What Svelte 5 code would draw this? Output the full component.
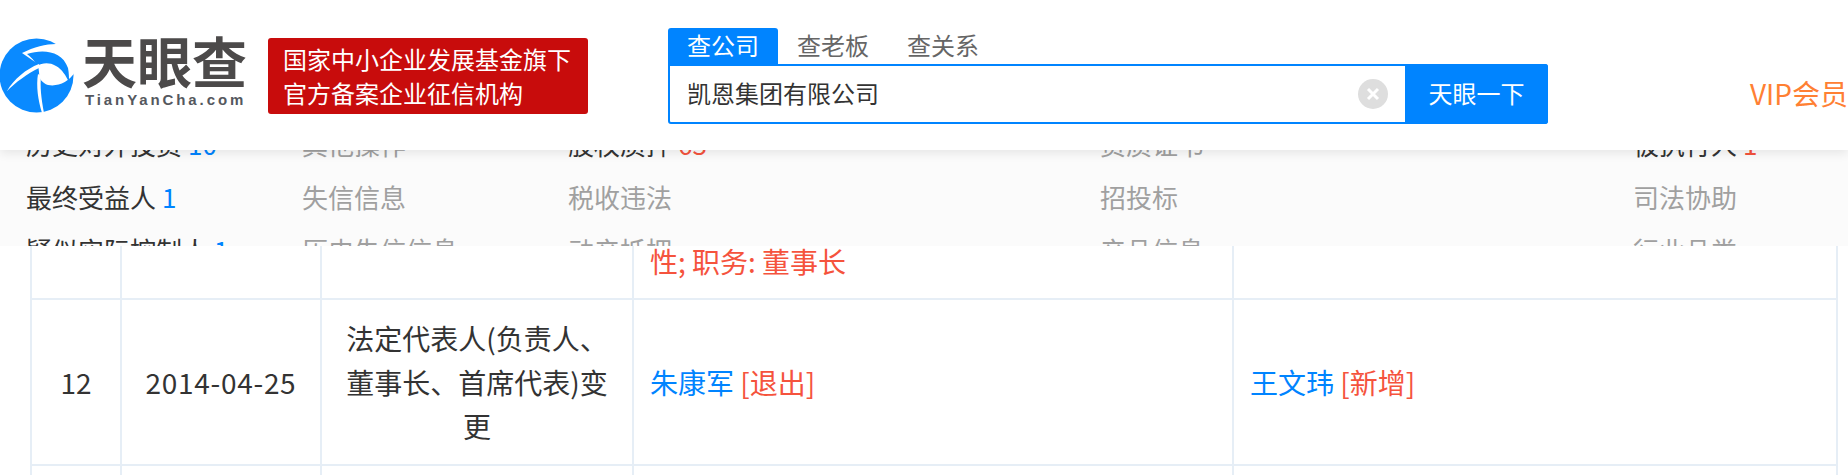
<script>
  const navRows = [
    [
      { label: "历史对外投资", count: "10", on: true, tone: "blue" },
      { label: "其他操作" },
      { label: "股权质押", count: "63", on: true, tone: "red" },
      { label: "资质证书" },
      { label: "被执行人", count: "1", on: true, tone: "red" }
    ],
    [
      { label: "最终受益人", count: "1", on: true, tone: "blue" },
      { label: "失信信息" },
      { label: "税收违法" },
      { label: "招投标" },
      { label: "司法协助" }
    ],
    [
      { label: "疑似实际控制人", count: "1", on: true, tone: "blue" },
      { label: "历史失信信息" },
      { label: "动产抵押" },
      { label: "产品信息" },
      { label: "行业品类" }
    ]
  ];

  let query = $state("凯恩集团有限公司");
  let activeTab = $state("查公司");
  const tabs = ["查公司", "查老板", "查关系"];
</script>

<div class="page">
  <header>
    <div class="logo">
      <svg class="mark" viewBox="0 0 75 76" width="75" height="76">
        <circle cx="36.5" cy="37.5" r="37" fill="#0a8aff" />
        <!-- white swirl, then the inner blue band on top of it -->
        <path fill="#fff" d="M22 15C34 9 46 6 56 6L76 6V34L72 36L76 32C70 44 58 49 48 47C42 45 39 41 39 34L38 26Z" />
        <path fill="#0a8aff" d="M27 16C42 11 62 12 68 30C69 35 69 40 69 44C66 38 62 31 56 28C49 24 42 25 37 28C35 23 31 19 27 16Z" />
        <path fill="#fff" d="M39 26C26 31 14 41 7 53C16 44 27 36 39 30Z" />
        <path fill="#fff" d="M38 36C36 48 38 62 42 75H44C41 60 40 48 41 38Z" />
      </svg>
      <div class="wordmark">
        <span class="name">天眼查</span>
        <span class="domain">TianYanCha.com</span>
      </div>
    </div>

    <div class="badge">国家中小企业发展基金旗下<br />官方备案企业征信机构</div>

    <div class="search">
      <div class="tabs">
        {#each tabs as tab}
          <button class:active={activeTab === tab} onclick={() => (activeTab = tab)}>{tab}</button>
        {/each}
      </div>
      <div class="box">
        <input bind:value={query} type="text" />
        <span class="clear">
          <svg viewBox="0 0 30 30" width="30" height="30">
            <circle cx="15" cy="15" r="15" fill="#dedede" />
            <path d="M10 10L20 20M20 10L10 20" stroke="#fff" stroke-width="3" />
          </svg>
        </span>
        <button class="go">天眼一下</button>
      </div>
    </div>

    <a class="vip" href="#vip">VIP会员</a>
  </header>

  <nav>
    <div class="grid">
      {#each navRows as row}
        {#each row as item}
          <span class="item" class:on={item.on}>
            {item.label}{#if item.count}<em class={item.tone}>{item.count}</em>{/if}
          </span>
        {/each}
      {/each}
    </div>
  </nav>

  <table>
    <colgroup>
      <col style="width: 90px" />
      <col style="width: 200px" />
      <col style="width: 312px" />
      <col style="width: 600px" />
      <col style="width: 604px" />
    </colgroup>
    <tbody>
      <tr class="clipped">
        <td></td>
        <td></td>
        <td></td>
        <td class="left red">性; 职务: 董事长</td>
        <td></td>
      </tr>
      <tr>
        <td>12</td>
        <td class="date">2014-04-25</td>
        <td>法定代表人(负责人、董事长、首席代表)变更</td>
        <td class="left"><span class="blue">朱康军</span> <span class="red">[退出]</span></td>
        <td class="left"><span class="blue">王文玮</span> <span class="red">[新增]</span></td>
      </tr>
      <tr class="empty">
        <td></td>
        <td></td>
        <td></td>
        <td></td>
        <td></td>
      </tr>
    </tbody>
  </table>
</div>

<style>
  :global(body) {
    margin: 0;
    background: #fff;
    overflow: hidden;
  }

  .page {
    height: 475px;
    overflow: hidden;
    font-family: "Noto Sans CJK SC", "Noto Sans", sans-serif;
    color: #333;
  }

  header {
    position: relative;
    z-index: 2;
    display: flex;
    align-items: flex-start;
    height: 150px;
    background: #fff;
    box-shadow: 0 3px 10px rgba(0, 0, 0, 0.09);
    overflow: hidden;
  }

  .logo {
    display: flex;
    width: 268px;
    padding-top: 38px;
  }

  .mark {
    flex: none;
  }

  .wordmark {
    display: flex;
    flex-direction: column;
    margin-left: 7px;
    color: #4c4a4a;
  }

  .name {
    font-size: 55px;
    line-height: 42px;
    font-weight: 700;
    height: 53px;
  }

  .domain {
    margin-left: 3px;
    font-family: "Liberation Sans", sans-serif;
    font-size: 15px;
    line-height: 18px;
    font-weight: 700;
    letter-spacing: 2.9px;
    color: #55585e;
    white-space: nowrap;
  }

  .badge {
    margin-top: 38px;
    width: 320px;
    height: 76px;
    box-sizing: border-box;
    padding: 4px 15px;
    border-radius: 3px;
    background: #c80c0c;
    color: #fff;
    font-size: 24px;
    line-height: 34px;
  }

  .search {
    margin: 28px 0 0 80px;
    width: 880px;
  }

  .tabs {
    display: flex;
    height: 36px;
  }

  .tabs button {
    padding: 0 19px 2px;
    border: none;
    border-radius: 3px 3px 0 0;
    background: none;
    color: #666;
    font: inherit;
    font-size: 24px;
    line-height: 34px;
    cursor: pointer;
  }

  .tabs button.active {
    background: #0084ff;
    color: #fff;
  }

  .box {
    display: flex;
    align-items: center;
    height: 60px;
    box-sizing: border-box;
    border: 2px solid #0084ff;
    border-radius: 0 3px 3px 3px;
  }

  .box input {
    flex: 1;
    min-width: 0;
    height: 100%;
    box-sizing: border-box;
    padding: 0 0 4px 17px;
    border: none;
    outline: none;
    font: inherit;
    font-size: 24px;
    color: #333;
    background: none;
  }

  .clear {
    display: flex;
    margin: 0 17px 0 10px;
  }

  .go {
    width: 143px;
    height: 60px;
    margin-right: -2px;
    padding: 0 0 4px;
    border: none;
    border-radius: 0 3px 3px 0;
    background: #0084ff;
    color: #fff;
    font: inherit;
    font-size: 24px;
    cursor: pointer;
  }

  .vip {
    flex: none;
    margin: 71px 0 0 202px;
    color: #ff8033;
    font-size: 28px;
    line-height: 44px;
    text-decoration: none;
    white-space: nowrap;
  }

  nav {
    height: 96px;
    overflow: hidden;
    background: #fbfbfb;
  }

  .grid {
    display: grid;
    grid-template-columns: 276px 266px 532px 533px 1fr;
    grid-auto-rows: 53px;
    align-items: center;
    margin-top: -33px;
    padding-left: 26px;
  }

  .item {
    font-size: 26px;
    line-height: 53px;
    color: #a0a0a0;
    white-space: nowrap;
  }

  .item.on {
    color: #333;
  }

  .item em {
    margin-left: 6px;
    font-style: normal;
  }

  em.blue {
    color: #0084ff;
  }

  em.red {
    color: #f5533d;
  }

  table {
    width: 1808px;
    margin-left: 30px;
    table-layout: fixed;
    border-collapse: collapse;
    font-size: 28px;
    line-height: 44px;
    color: #333;
  }

  td {
    padding: 16px;
    border: 2px solid #e6eef6;
    text-align: center;
  }

  td.date {
    letter-spacing: 0.7px;
  }

  tr.clipped td {
    height: 53px;
    box-sizing: border-box;
    padding-top: 0;
    padding-bottom: 0;
    line-height: 30px;
    border-top: none;
    vertical-align: top;
  }

  tr.empty td {
    height: 60px;
  }

  td.left {
    text-align: left;
  }

  .red {
    color: #f5533d;
  }

  .blue {
    color: #0084ff;
  }
</style>
